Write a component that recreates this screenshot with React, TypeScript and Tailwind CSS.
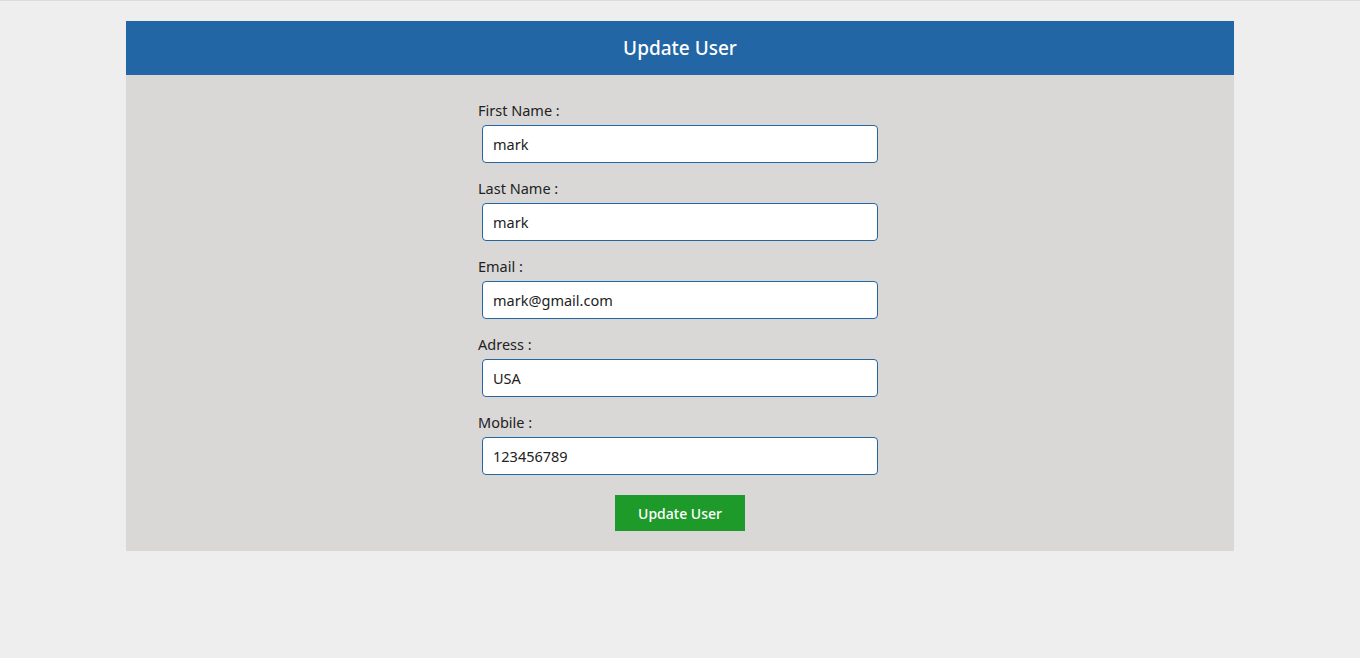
const fields = [
  { label: "First Name :", value: "mark" },
  { label: "Last Name :", value: "mark" },
  { label: "Email :", value: "mark@gmail.com" },
  { label: "Adress :", value: "USA" },
  { label: "Mobile :", value: "123456789" },
];

export default function App() {
  return (
    <main
      className="min-h-screen border-t border-[#dcdcdc] bg-[#eeeeee] pt-5 text-[#222]"
      style={{ fontFamily: '"Noto Sans", "Open Sans", sans-serif' }}
    >
      <div className="mx-auto w-[1108px]">
        {/* Header */}
        <div className="flex h-[54px] items-center justify-center bg-[#2266a6]">
          <h1 className="text-[19px] font-medium text-white">Update User</h1>
        </div>

        {/* Form */}
        <form className="flex flex-col items-center bg-[#d9d8d6] pt-[23px] pb-5">
          <div className="w-[404px]">
            {fields.map((field, index) => (
              <div key={index} className="mb-[13px] flex flex-col">
                <label className="h-6 text-[14.5px] leading-6 text-[#222]">{field.label}</label>
                <input
                  defaultValue={field.value}
                  className="mt-[3px] ml-1 h-[38px] w-[396px] rounded-[4px] border border-[#2266a6] bg-white px-[10px] text-[14.5px] text-[#222] outline-none"
                />
              </div>
            ))}
          </div>
          <button
            type="button"
            className="mt-[7px] h-9 w-[130px] bg-[#1e9a2a] text-[14px] font-medium text-white"
          >
            Update User
          </button>
        </form>
      </div>
    </main>
  );
}
